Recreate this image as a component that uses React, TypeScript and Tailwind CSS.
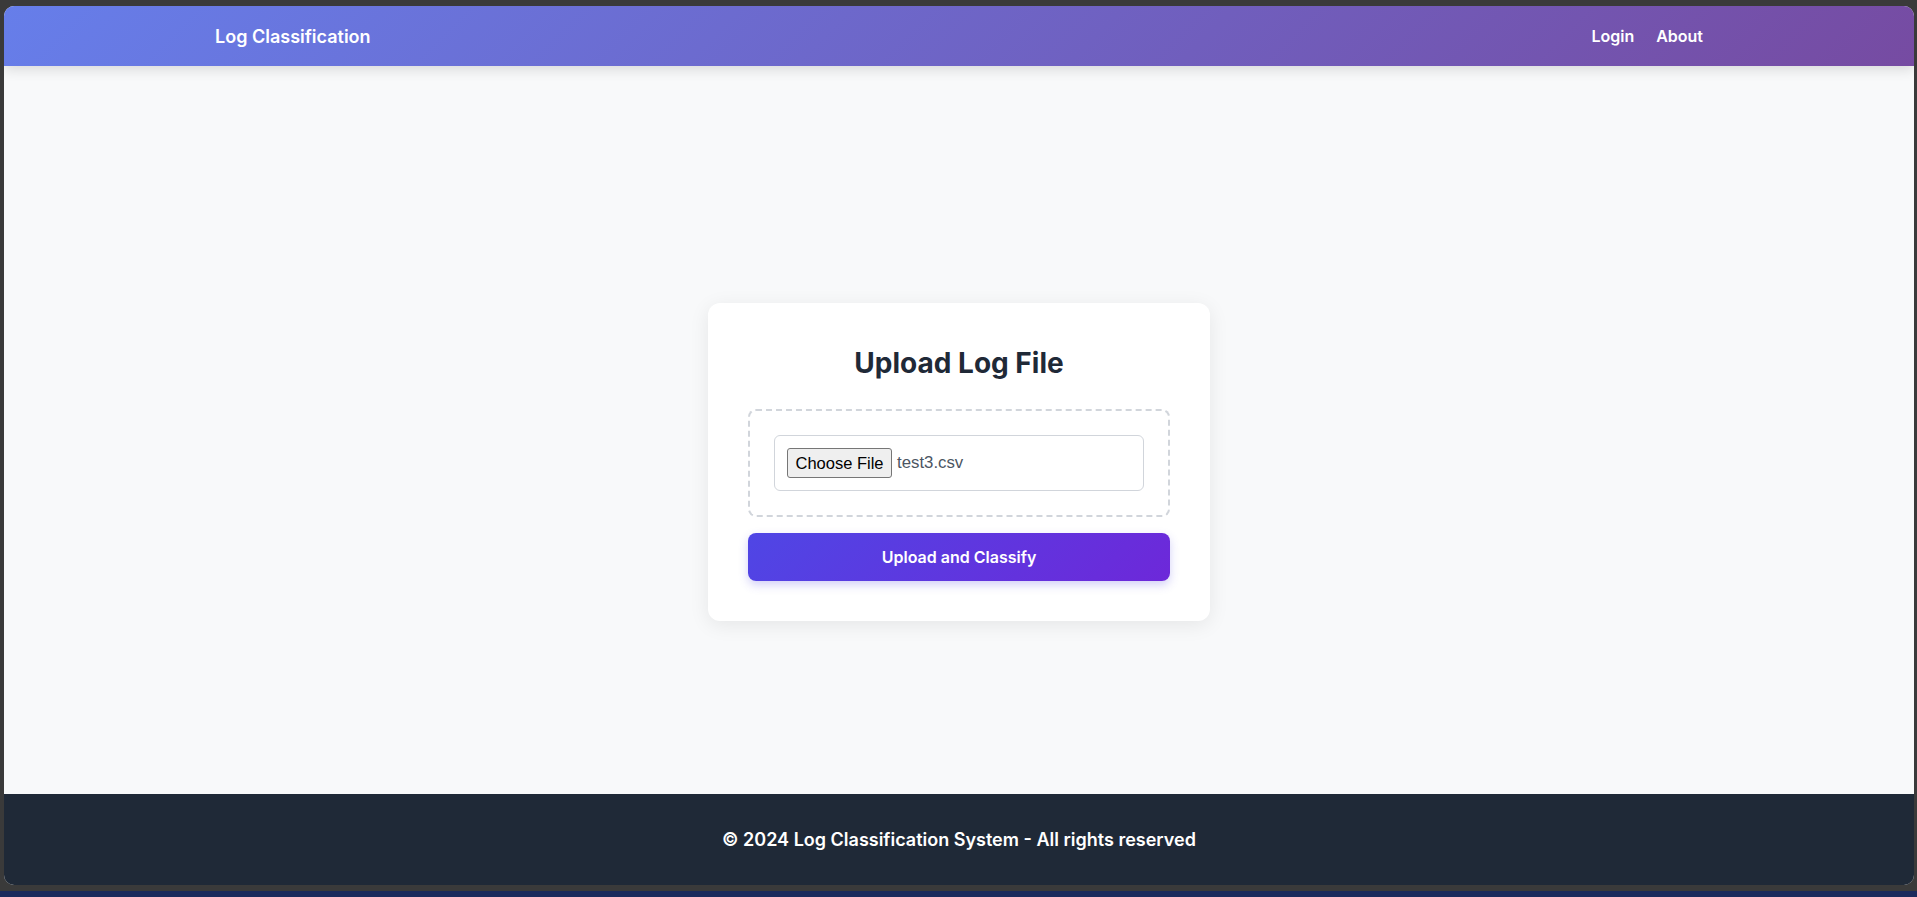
const Navbar = () => {
  return (
    <nav className="relative z-10 flex h-[60px] shrink-0 items-center justify-between bg-[linear-gradient(135deg,#667eea_0%,#764ba2_100%)] px-[211px] shadow-[0_4px_12px_rgba(0,0,0,0.12)]">
      <span className="text-[18px] font-semibold text-white">Log Classification</span>
      <div className="flex items-center gap-[22px] text-[16px] font-semibold text-white">
        <a href="#">Login</a>
        <a href="#">About</a>
      </div>
    </nav>
  );
};

const UploadCard = () => {
  return (
    <div className="w-[502px] rounded-[12px] bg-white px-[40px] pt-[42px] pb-[40px] shadow-[0_4px_20px_rgba(0,0,0,0.08)]">
      <h2 className="text-center text-[28px] leading-[36px] font-bold text-[#1f2937]">Upload Log File</h2>
      <div className="mt-[28px] rounded-[8px] border-2 border-dashed border-[#d1d5db] p-[24px]">
        <div className="flex h-[56px] items-center rounded-[6px] border border-[#d1d5db] px-[12px]">
          <span className="flex h-[30px] w-[105px] items-center justify-center rounded-[3px] border border-[#767676] bg-[#efefef] font-['Liberation_Sans',Arial,sans-serif] text-[16.5px] text-black">
            Choose File
          </span>
          <span className="ml-[5px] font-['Liberation_Sans',Arial,sans-serif] text-[16.8px] text-[#4b5563]">test3.csv</span>
        </div>
      </div>
      <button className="mt-[16px] flex h-[48px] w-full items-center justify-center rounded-[8px] bg-[linear-gradient(135deg,#4f46e5_0%,#6d28d9_100%)] text-[16px] font-semibold text-white shadow-[0_4px_10px_rgba(79,70,229,0.25)]">
        Upload and Classify
      </button>
    </div>
  );
};

export default function App() {
  return (
    <div className="flex h-[897px] w-[1917px] flex-col overflow-hidden bg-[#3a3a3a] font-['Inter',sans-serif]">
      <div className="mt-[6px] mr-[3px] ml-[4px] flex h-[879px] flex-col overflow-hidden rounded-[10px] bg-[#f8f9fa]">
        <Navbar />
        <main className="flex flex-1 items-center justify-center pt-[64px]">
          <UploadCard />
        </main>
        <footer className="flex h-[91px] shrink-0 items-center justify-center bg-[#1f2937]">
          <p className="text-[18px] font-semibold text-white">© 2024 Log Classification System - All rights reserved</p>
        </footer>
      </div>
      <div className="h-[6px] shrink-0" />
      <div className="h-[6px] shrink-0 bg-[#1b2a5c]" />
    </div>
  );
}
